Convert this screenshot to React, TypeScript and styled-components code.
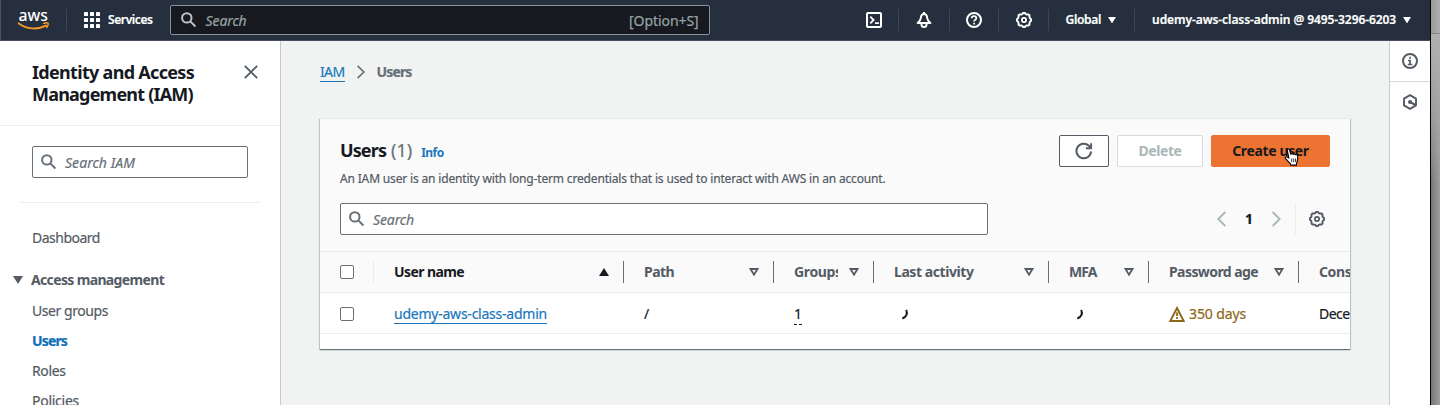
import React from 'react';
import styled, { createGlobalStyle, css } from 'styled-components';

const GlobalStyle = createGlobalStyle`
  *, *::before, *::after { box-sizing: border-box; }
  html, body { margin: 0; overflow: hidden; }
  body {
    font-family: "Noto Sans", "Open Sans", sans-serif;
    font-size: 14px;
    line-height: 22px;
    color: #16191f;
    -webkit-text-stroke: 0.2px;
  }
  button, input { font-family: inherit; }
  svg { display: block; flex: none; }
`;

/* ---------- shell ---------- */

const Desktop = styled.div`
  display: flex;
  width: 1440px;
  height: 405px;
  overflow: hidden;
`;

const Browser = styled.div`
  display: flex;
  flex-direction: column;
  width: 1430px;
  height: 405px;
  flex: none;
`;

const Backdrop = styled.div`
  display: flex;
  flex-direction: column;
  flex: 1;
  border-left: 1px solid #000;
`;

const BackdropTop = styled.div`
  height: 34px;
  border-bottom: 1px solid #858585;
  background: linear-gradient(90deg, #999, #b0b0b0);
`;

const BackdropBody = styled.div`
  flex: 1;
  background:
    linear-gradient(180deg, rgba(176, 176, 176, 1) 0, rgba(170, 170, 170, 0.7) 80px, rgba(150, 150, 150, 0) 150px),
    linear-gradient(90deg, #777, #9f9f9f);
`;

const Body = styled.div`
  display: flex;
  flex: 1;
  min-height: 0;
`;

const Label = styled.span<{ $track?: number }>`
  letter-spacing: ${p => p.$track ?? 0}px;
  white-space: nowrap;
`;

/* ---------- top bar ---------- */

const TopBar = styled.header`
  display: flex;
  align-items: center;
  height: 41px;
  padding-left: 17px;
  flex: none;
  background: #252f3d;
  border-left: 1px solid #4a5360;
  border-bottom: 1px solid #474d5b;
  color: #fff;
  font-size: 12px;
  font-weight: 600;
`;

const TopDivider = styled.i<{ $before: number; $after: number }>`
  width: 1px;
  height: 22px;
  margin: 0 ${p => p.$after}px 0 ${p => p.$before}px;
  background: #424650;
`;

const TopItem = styled.div<{ $gap?: number }>`
  display: flex;
  align-items: center;
  gap: ${p => p.$gap ?? 8}px;
  height: 32px;
  line-height: 32px;
`;

const GlobalSearch = styled.div`
  display: flex;
  align-items: center;
  width: 540px;
  height: 30px;
  margin: 0 156px 0 17px;
  padding: 0 10px 0 10px;
  background: #18191e;
  border: 1px solid #87959a;
  border-radius: 2px;
  color: #95a5a6;
  font-size: 14px;
  font-weight: 400;
  line-height: 22px;

  span { padding-top: 1px; }
  svg { color: #b9c4c5; }
`;

const SearchHint = styled.span`
  flex: 1;
  margin-left: 9px;
  font-style: italic;
  letter-spacing: -0.12px;
`;

/* ---------- side navigation ---------- */

const SideNav = styled.nav`
  width: 281px;
  flex: none;
  background: #fff;
  border-right: 1px solid #c6cacb;
`;

const SideHeader = styled.div`
  display: flex;
  justify-content: space-between;
  height: 85px;
  padding: 20px 22px 0 32px;
  border-bottom: 1px solid #eaeded;
`;

const SideTitle = styled.h1`
  display: flex;
  flex-direction: column;
  margin: 0;
  font-size: 18px;
  line-height: 22px;
  font-weight: 700;
  -webkit-text-stroke: 0;
`;

const CloseIconBox = styled.div`
  padding-top: 4px;
`;

const SideSearch = styled.div`
  padding: 20px 0 24px;
  margin: 0 20px;
  border-bottom: 1px solid #eaeded;
`;

const SearchField = styled.div<{ $width: number; $left?: number }>`
  display: flex;
  align-items: center;
  gap: 8px;
  width: ${p => p.$width}px;
  height: 32px;
  margin-left: ${p => p.$left ?? 0}px;
  padding-left: 8px;
  background: #fff;
  border: 1px solid #687078;
  border-radius: 2px;
  color: #687078;
  font-style: italic;

  span { padding-top: 1px; }
`;

const NavList = styled.ul`
  list-style: none;
  margin: 0;
  padding: 24px 0 0;
`;

const NavItem = styled.li<{ $active?: boolean }>`
  height: 30px;
  padding: 0 0 0 32px;
  color: ${p => (p.$active ? '#0f6fb9' : '#545b64')};
  font-weight: ${p => (p.$active ? 700 : 400)};
`;

const NavGroup = styled.li`
  display: flex;
  align-items: center;
  gap: 8px;
  height: 22px;
  margin: 12px 0 9px;
  padding-left: 13px;
  color: #545b64;
  font-weight: 700;
  -webkit-text-stroke: 0;
`;

/* ---------- main ---------- */

const Main = styled.main`
  flex: 1;
  min-width: 0;
  padding: 20px 39px 0;
  background: #f1f3f3;
`;

const Breadcrumbs = styled.div`
  display: flex;
  align-items: flex-start;
  height: 22px;
  margin-bottom: 35px;
  color: #687078;
  font-weight: 700;
`;

const CrumbLink = styled.a`
  height: 21px;
  border-bottom: 1px solid #1a77bd;
  color: #1a77bd;
  font-weight: 400;
`;

const CrumbChevron = styled.span`
  padding: 4px 12px 0 12px;
`;

const Card = styled.section`
  width: 1030px;
  height: 231px;
  overflow: hidden;
  background: #fff;
  border-top: 1px solid #e3ebeb;
  box-shadow: 0 1px 1px rgba(0, 28, 36, 0.42), 1px 1px 1px rgba(0, 28, 36, 0.16), -1px 1px 1px rgba(0, 28, 36, 0.16);
`;

const CardHeader = styled.div`
  height: 133px;
  padding: 16px 20px 0;
  background: #fafafa;
  border-bottom: 1px solid #eaeded;
`;

const TitleRow = styled.div`
  display: flex;
  height: 49px;
`;

const TitleBlock = styled.div`
  flex: 1;
`;

const Title = styled.h2`
  display: flex;
  align-items: baseline;
  height: 32px;
  margin: 0;
  font-size: 18px;
  line-height: 30px;
  font-weight: 700;
  -webkit-text-stroke: 0;
`;

const Counter = styled.span`
  margin-left: 5px;
  color: #687078;
  font-weight: 400;
  -webkit-text-stroke: 0.2px;
`;

const InfoLink = styled.a`
  margin-left: 9px;
  color: #1a77bd;
  font-size: 12px;
  font-weight: 700;
  letter-spacing: -0.5px;
`;

const Description = styled.p`
  margin: 1px 0 0;
  font-size: 12px;
  line-height: 22px;
  color: #545b64;
  letter-spacing: -0.163px;
  white-space: nowrap;
`;

const Actions = styled.div`
  display: flex;
  gap: 8px;
  align-items: flex-start;
`;

const Button = styled.button<{ $width: number; $kind?: 'normal' | 'disabled' | 'primary' }>`
  display: flex;
  align-items: center;
  justify-content: center;
  width: ${p => p.$width}px;
  height: 32px;
  padding: 0 0 1px;
  background: #fff;
  border: 1px solid #545b64;
  border-radius: 2px;
  color: #545b64;
  font-size: 14px;
  font-weight: 700;
  -webkit-text-stroke: 0;
  ${p => p.$kind === 'disabled' && css`
    border-color: #d5dbdb;
    color: #aab7b8;
  `}
  ${p => p.$kind === 'primary' && css`
    position: relative;
    background: #ec7331;
    border-color: #ec7331;
    color: #18191e;
  `}
`;

const Pointer = styled.span`
  position: absolute;
  left: 71px;
  top: 12px;
`;

const FilterRow = styled.div`
  display: flex;
  align-items: center;
  height: 32px;
  margin-top: 19px;
`;

const Pager = styled.div`
  display: flex;
  align-items: center;
  margin-left: auto;
  color: #aab7b8;
`;

const PageNumber = styled.span`
  width: 46px;
  text-align: center;
  color: #16191f;
  font-weight: 700;
`;

const PagerSettings = styled.div`
  display: flex;
  align-items: center;
  height: 32px;
  margin-left: 14px;
  padding: 0 5px 0 13px;
  border-left: 1px solid #eaeded;
  color: #545b64;
`;

const Row = styled.div<{ $head?: boolean }>`
  display: grid;
  grid-template-columns: 54px 250px 150px 100px 175px 100px 150px 75px;
  align-items: center;
  height: 41px;
  background: ${p => (p.$head ? '#fafafa' : '#fff')};
  border-bottom: 1px solid #eaeded;
  color: ${p => (p.$head ? '#545b64' : '#16191f')};
  font-weight: ${p => (p.$head ? 700 : 400)};
  -webkit-text-stroke: ${p => (p.$head ? 0 : 0.2)}px;
`;

const HeadCell = styled.div<{ $divider?: string; $sorted?: boolean }>`
  display: flex;
  align-items: center;
  height: 22px;
  padding: 0 14px 0 20px;
  border-right: ${p => (p.$divider ? `1px solid ${p.$divider}` : '0')};
  color: ${p => (p.$sorted ? '#16191f' : 'inherit')};
`;

const HeadText = styled.div<{ $track: number }>`
  flex: 1;
  min-width: 0;
  margin-right: 11px;
  overflow: hidden;
  white-space: nowrap;
  letter-spacing: ${p => p.$track}px;
`;

const Cell = styled.div<{ $tone?: string }>`
  display: flex;
  align-items: center;
  gap: 4px;
  height: 22px;
  margin-top: 2px;
  padding-left: 20px;
  color: ${p => p.$tone ?? 'inherit'};
`;

const Checkbox = styled.span`
  width: 14px;
  height: 14px;
  background: #fff;
  border: 1px solid #687078;
  border-radius: 2px;
`;

const UserLink = styled.a`
  height: 20px;
  line-height: 20px;
  border-bottom: 1px solid #1a77bd;
  color: #1a77bd;
  letter-spacing: -0.233px;
`;

const GroupCount = styled.span`
  width: 8px;
  height: 21px;
  line-height: 20px;
  margin-top: 1px;
  background: repeating-linear-gradient(90deg, #16191f 0 3px, transparent 3px 5px) left bottom / 8px 1px no-repeat;
`;

const Spinner = styled.span`
  padding-left: 4px;
`;

/* ---------- tools panel ---------- */

const Tools = styled.aside`
  width: 41px;
  flex: none;
  background: #fff;
  border-left: 1px solid #c9cdce;
  color: #545b64;
`;

const Tool = styled.div<{ $ruled?: boolean }>`
  display: flex;
  align-items: center;
  justify-content: center;
  height: ${p => (p.$ruled ? 41 : 40)}px;
  border-bottom: ${p => (p.$ruled ? '1px solid #d5dbdb' : '0')};
`;

/* ---------- icons ---------- */

const Icon = ({ size = 16, children }: { size?: number; children: React.ReactNode }) => (
  <svg width={size} height={size} viewBox="0 0 16 16" fill="none" stroke="currentColor" strokeWidth="2">
    {children}
  </svg>
);

const AwsLogo = () => (
  <svg width="32" height="22" viewBox="0 0 32 22" fill="none">
    <text x="0.5" y="11.5" fontSize="15.5" fontFamily="Noto Sans, sans-serif" fontWeight="500" fill="#fff" textLength="29.5" lengthAdjust="spacingAndGlyphs">aws</text>
    <path d="M0.4 14.2C8.6 20.6 19.6 20.8 28 16.6" stroke="#f79a2c" strokeWidth="1.9" strokeLinecap="round" />
    <path d="M25.6 14.4c1.9-.7 4-.7 4.5-.2.5.6-.1 2.8-1.5 4.3" stroke="#f79a2c" strokeWidth="1.4" strokeLinecap="round" strokeLinejoin="round" />
  </svg>
);

const GridIcon = () => (
  <svg width="16" height="16" viewBox="0 0 16 16" fill="#fff">
    {[0, 6, 12].map(y => [0, 6, 12].map(x => <rect key={`${x}-${y}`} x={x} y={y} width="4" height="4" rx="0.6" />))}
  </svg>
);

const SearchIcon = () => (
  <Icon><circle cx="5.8" cy="5.9" r="4.7" /><path d="M9.3 9.4 14.4 14.5" /></Icon>
);

const GearIcon = () => {
  const pts: string[] = [];
  const n = 64;
  for (let i = 0; i < n; i++) {
    const a = (i / n) * Math.PI * 2;
    const r = 6.65 + 0.5 * Math.max(-1, Math.min(1, 1.8 * Math.cos(8 * a)));
    pts.push(`${(8 + r * Math.cos(a)).toFixed(2)} ${(8 + r * Math.sin(a)).toFixed(2)}`);
  }
  return <Icon><path d={`M${pts.join('L')}Z`} strokeWidth="1.9" /><circle cx="8" cy="8" r="2.1" strokeWidth="1.8" /></Icon>;
};

const TerminalIcon = () => (
  <Icon><rect x="1" y="1" width="14" height="14" rx="1" /><path d="M4.3 4.7 7.6 8 4.3 11.3M9 11.2h4" strokeWidth="1.8" /></Icon>
);

const BellIcon = () => (
  <Icon><path d="M8 0v2M8 2C5.6 2 5 4 4.8 6 4.6 8.6 3.4 9.6 1.6 11h12.8C12.6 9.6 11.4 8.6 11.2 6 11 4 10.4 2 8 2Z" strokeLinejoin="round" /><path d="M5.5 11.5v1c0 1.5 1 2.5 2.5 2.5s2.5-1 2.5-2.5v-1" /></Icon>
);

const HelpIcon = () => (
  <Icon><circle cx="8" cy="8" r="7" /><path d="M5.7 6.3C5.7 4.9 6.7 4.2 8 4.2s2.3.8 2.3 2c0 1.6-2.2 1.5-2.2 3.3M8.1 10.7v1.8" strokeWidth="1.8" /></Icon>
);

const InfoIcon = () => (
  <Icon><circle cx="8" cy="8" r="7" /><path d="M8 3.7v2M6 7.5h2v3.7M5.8 11.5h4.5" strokeWidth="1.7" /></Icon>
);

const HexIcon = () => (
  <Icon><path d="M8 1.2 14 4.6v6.8L8 14.8 2 11.4V4.6Z" strokeWidth="1.9" strokeLinejoin="round" /><circle cx="8" cy="8" r="2" fill="currentColor" stroke="none" /><path d="M8 8 13.5 11" /></Icon>
);

const RefreshIcon = () => (
  <Icon size={18}><path d="M14.3 8.4a6.5 6.5 0 1 1-2-5.1L14 5" strokeWidth="1.8" /><path d="M14.3 1v4.6H9.7" strokeWidth="1.7" /></Icon>
);

const CloseIcon = () => (
  <svg width="14" height="14" viewBox="0 0 14 14" stroke="#545b64" strokeWidth="1.9"><path d="M.8.8l12.4 12.4M13.2.8.8 13.2" /></svg>
);

const WarningIcon = () => (
  <Icon><path d="M8 2 14.7 15H1.3Z" strokeWidth="1.9" strokeLinejoin="miter" /><path d="M8 6.3v3.6M8 11v2" strokeWidth="1.7" /></Icon>
);

const Chevron = ({ dir, width = 9, height = 16 }: { dir: 'left' | 'right'; width?: number; height?: number }) => (
  <svg width={width} height={height} viewBox="0 0 9 16" fill="none" stroke="currentColor" strokeWidth="1.9">
    <path d={dir === 'left' ? 'M8.3 1 1.3 8l7 7' : 'M.7 1l7 7-7 7'} />
  </svg>
);

const Triangle = ({ up, hollow, width = 10, height = 8 }: { up?: boolean; hollow?: boolean; width?: number; height?: number }) => (
  <svg width={width} height={height} viewBox="0 0 10 8">
    {hollow
      ? <path d="M1.5 1h7L5 6.7Z" fill="none" stroke="currentColor" strokeWidth="1.8" />
      : <path d={up ? 'M0 8 5 0l5 8Z' : 'M0 0h10L5 8Z'} fill="currentColor" />}
  </svg>
);

const SpinnerArc = () => (
  <svg width="12" height="12" viewBox="0 0 12 12" fill="none" stroke="#16191f" strokeWidth="2">
    <path d="M8.2 1.9C9.8 5.4 8.7 9 4.3 10.5" />
  </svg>
);

const HandCursor = () => (
  <svg width="18" height="20" viewBox="0 0 18 20">
    <path
      d="M4.2 2.2C4 .7 6.2.5 6.6 2l1.2 4.3c.6-.9 2-.8 2.4.1.7-.7 1.9-.5 2.3.4.9-.4 2 .1 2.1 1.2.2 1.9.3 3.7-.3 5.2l-.8 2.2v1.7H7.7L7.3 15.6c-1.5-1.5-3-3.2-4.8-4.9-.9-1.2.5-2.4 1.7-1.7l1.7 1.1Z"
      fill="#fff" stroke="#000" strokeWidth="1.1" strokeLinejoin="round"
    />
    <path d="M8.7 10.5v3.7M10.7 10.5v3.7M12.6 10.5v3.7" stroke="#000" strokeWidth="0.8" />
  </svg>
);

/* ---------- data ---------- */

const columns = [
  { name: 'Path', track: -0.56 },
  { name: 'Groups', track: -0.35 },
  { name: 'Last activity', track: -0.43 },
  { name: 'MFA', track: -0.93 },
  { name: 'Password age', track: -0.577 },
];

const accessLinks = [
  { name: 'User groups', track: -0.437 },
  { name: 'Users', track: -0.85, active: true },
  { name: 'Roles', track: -0.378 },
  { name: 'Policies', track: -0.262 },
];

export default function App() {
  return (
    <>
      <GlobalStyle />
      <Desktop>
        <Browser>
          <TopBar>
            <AwsLogo />
            <TopDivider $before={16} $after={17} />
            <TopItem><GridIcon /><Label $track={-0.4}>Services</Label></TopItem>
            <GlobalSearch>
              <SearchIcon />
              <SearchHint>Search</SearchHint>
              <Label $track={-0.07}>[Option+S]</Label>
            </GlobalSearch>
            <TerminalIcon />
            <TopDivider $before={16} $after={17} />
            <BellIcon />
            <TopDivider $before={17} $after={16} />
            <HelpIcon />
            <TopDivider $before={16} $after={17} />
            <GearIcon />
            <TopDivider $before={16} $after={17} />
            <TopItem $gap={7}><Label $track={-0.32}>Global</Label><Triangle width={8} height={6.5} /></TopItem>
            <TopDivider $before={18} $after={17} />
            <TopItem $gap={7}>
              <Label $track={-0.083}>udemy-aws-class-admin @ 9495-3296-6203</Label>
              <Triangle width={8} height={6.5} />
            </TopItem>
          </TopBar>

          <Body>
            <SideNav>
              <SideHeader>
                <SideTitle>
                  <Label $track={-0.69}>Identity and Access</Label>
                  <Label $track={-0.79}>Management (IAM)</Label>
                </SideTitle>
                <CloseIconBox><CloseIcon /></CloseIconBox>
              </SideHeader>
              <SideSearch>
                <SearchField $width={216} $left={12}><SearchIcon /><Label $track={0.04}>Search IAM</Label></SearchField>
              </SideSearch>
              <NavList>
                <NavItem><Label $track={-0.5}>Dashboard</Label></NavItem>
                <NavGroup><Triangle /><Label $track={-0.65}>Access management</Label></NavGroup>
                {accessLinks.map(l => (
                  <NavItem key={l.name} $active={l.active}><Label $track={l.track}>{l.name}</Label></NavItem>
                ))}
              </NavList>
            </SideNav>

            <Main>
              <Breadcrumbs>
                <CrumbLink><Label $track={-0.63}>IAM</Label></CrumbLink>
                <CrumbChevron><Chevron dir="right" width={8} height={14} /></CrumbChevron>
                <Label $track={-0.85}>Users</Label>
              </Breadcrumbs>

              <Card>
                <CardHeader>
                  <TitleRow>
                    <TitleBlock>
                      <Title>
                        <Label $track={-0.89}>Users</Label>
                        <Counter>(1)</Counter>
                        <InfoLink>Info</InfoLink>
                      </Title>
                      <Description>
                        An IAM user is an identity with long-term credentials that is used to interact with AWS in an account.
                      </Description>
                    </TitleBlock>
                    <Actions>
                      <Button $width={50}><RefreshIcon /></Button>
                      <Button $width={86} $kind="disabled"><Label $track={-0.428}>Delete</Label></Button>
                      <Button $width={119} $kind="primary">
                        <Label $track={-0.366}>Create user</Label>
                        <Pointer><HandCursor /></Pointer>
                      </Button>
                    </Actions>
                  </TitleRow>
                  <FilterRow>
                    <SearchField $width={648}><SearchIcon /><Label $track={-0.12}>Search</Label></SearchField>
                    <Pager>
                      <Chevron dir="left" />
                      <PageNumber>1</PageNumber>
                      <Chevron dir="right" />
                      <PagerSettings><GearIcon /></PagerSettings>
                    </Pager>
                  </FilterRow>
                </CardHeader>

                <Row $head>
                  <HeadCell $divider="#eaeded"><Checkbox /></HeadCell>
                  <HeadCell $divider="#687078" $sorted>
                    <HeadText $track={-0.596}>User name</HeadText>
                    <Triangle up />
                  </HeadCell>
                  {columns.map(c => (
                    <HeadCell key={c.name} $divider="#687078">
                      <HeadText $track={c.track}>{c.name}</HeadText>
                      <Triangle hollow />
                    </HeadCell>
                  ))}
                  <HeadCell><Label $track={-0.4}>Console last sign-in</Label></HeadCell>
                </Row>

                <Row>
                  <Cell><Checkbox /></Cell>
                  <Cell><UserLink>udemy-aws-class-admin</UserLink></Cell>
                  <Cell>/</Cell>
                  <Cell><GroupCount>1</GroupCount></Cell>
                  <Cell><Spinner><SpinnerArc /></Spinner></Cell>
                  <Cell><Spinner><SpinnerArc /></Spinner></Cell>
                  <Cell $tone="#8d6718"><WarningIcon /><Label $track={-0.12}>350 days</Label></Cell>
                  <Cell><Label $track={-0.55}>December</Label></Cell>
                </Row>
              </Card>
            </Main>

            <Tools>
              <Tool $ruled><InfoIcon /></Tool>
              <Tool><HexIcon /></Tool>
            </Tools>
          </Body>
        </Browser>
        <Backdrop><BackdropTop /><BackdropBody /></Backdrop>
      </Desktop>
    </>
  );
}
